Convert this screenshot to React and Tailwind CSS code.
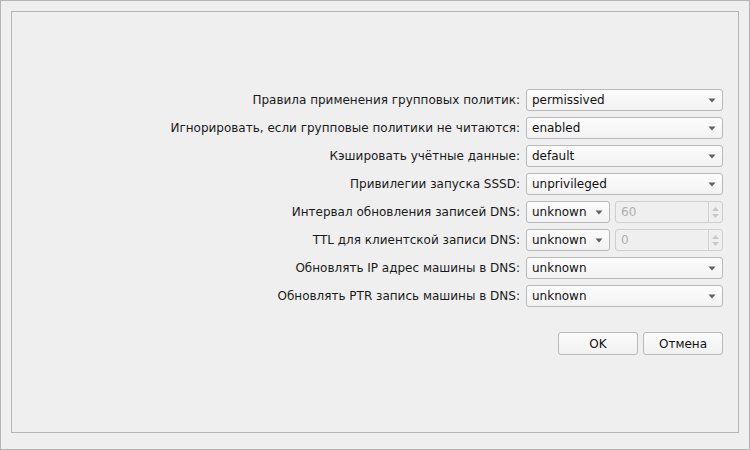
import React from "react";

const Arrow = () => (
  <svg width="8" height="5" viewBox="0 0 8 5" className="shrink-0">
    <path d="M0.5 0.5 L7.5 0.5 L4 4.5 Z" fill="#606060" />
  </svg>
);

const Combo = ({ value, w = "w-[197px]" }) => (
  <div
    className={`${w} h-[22px] flex items-center justify-between pl-[5px] pr-[6px] rounded-[3px] border border-[#b9b9b9] bg-gradient-to-b from-[#fbfbfb] to-[#f3f3f3] text-[12px] text-[#111]`}
  >
    <span className="leading-none">{value}</span>
    <Arrow />
  </div>
);

const Spin = ({ value }) => (
  <div className="w-[108px] h-[22px] flex rounded-[3px] border border-[#cfcfcf] bg-[#efefef] text-[12px] text-[#b0b0b0]">
    <div className="flex-1 flex items-center pl-[5px] leading-none">{value}</div>
    <div className="w-[14px] border-l border-[#d4d4d4] flex flex-col items-center justify-center gap-[3px]">
      <svg width="7" height="4" viewBox="0 0 7 4">
        <path d="M0 4 L7 4 L3.5 0 Z" fill="#c8c8c8" />
      </svg>
      <svg width="7" height="4" viewBox="0 0 7 4">
        <path d="M0 0 L7 0 L3.5 4 Z" fill="#c8c8c8" />
      </svg>
    </div>
  </div>
);

const rows = [
  ["Правила применения групповых политик:", <Combo value="permissived" />],
  ["Игнорировать, если групповые политики не читаются:", <Combo value="enabled" />],
  ["Кэшировать учётные данные:", <Combo value="default" />],
  ["Привилегии запуска SSSD:", <Combo value="unprivileged" />],
  [
    "Интервал обновления записей DNS:",
    <div className="flex gap-[5px]">
      <Combo value="unknown" w="w-[84px]" />
      <Spin value="60" />
    </div>,
  ],
  [
    "TTL для клиентской записи DNS:",
    <div className="flex gap-[5px]">
      <Combo value="unknown" w="w-[84px]" />
      <Spin value="0" />
    </div>,
  ],
  ["Обновлять IP адрес машины в DNS:", <Combo value="unknown" />],
  ["Обновлять PTR запись машины в DNS:", <Combo value="unknown" />],
];

export default function App() {
  return (
    <div
      className="w-[750px] h-[450px] border border-[#b4b4b4] bg-[#efefef] pt-[10px] px-[10px]"
      style={{ fontFamily: '"DejaVu Sans", sans-serif' }}
    >
      <div className="w-[728px] h-[422px] border border-[#b4b4b4] bg-[#efefef] pt-[77px] pr-[15px] flex flex-col items-end">
        <div className="grid grid-cols-[auto_197px] gap-x-[6px] gap-y-[6px] items-center">
          {rows.map(([label, ctrl], i) => (
            <React.Fragment key={i}>
              <div className="text-right text-[12px] text-[#1a1a1a] leading-none">{label}</div>
              {ctrl}
            </React.Fragment>
          ))}
        </div>
        <div className="flex gap-[5px] mt-[25px]">
          <button className="w-[80px] h-[23px] rounded-[3px] border border-[#b9b9b9] bg-gradient-to-b from-[#fbfbfb] to-[#f1f1f1] text-[12px] text-[#111]">
            OK
          </button>
          <button className="w-[80px] h-[23px] rounded-[3px] border border-[#b9b9b9] bg-gradient-to-b from-[#fbfbfb] to-[#f1f1f1] text-[12px] text-[#111]">
            Отмена
          </button>
        </div>
      </div>
    </div>
  );
}
